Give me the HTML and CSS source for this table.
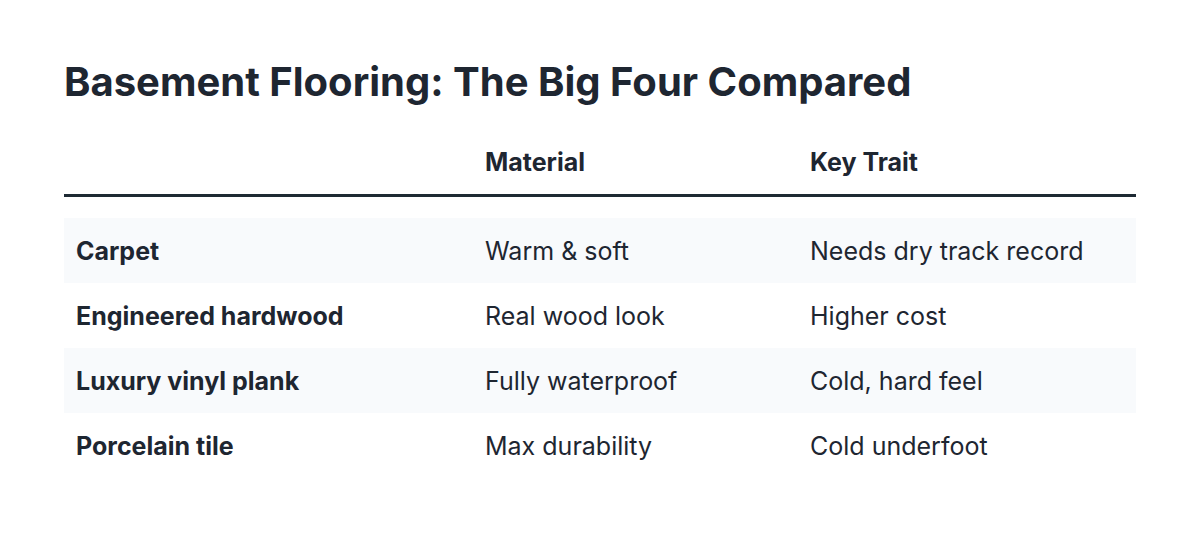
FILE: index.html
```html
<!DOCTYPE html>
<html lang="en">
<head>
<meta charset="utf-8">
<title>Basement Flooring</title>
<link rel="stylesheet" href="styles.css">
</head>
<body>
<main class="page">
  <h1 class="title">Basement Flooring: The Big Four Compared</h1>
  <table class="cmp">
    <thead>
      <tr>
        <th class="c1"></th>
        <th class="c2">Material</th>
        <th class="c3">Key Trait</th>
      </tr>
    </thead>
    <tbody>
      <tr class="alt">
        <td class="name">Carpet</td>
        <td>Warm &amp; soft</td>
        <td>Needs dry track record</td>
      </tr>
      <tr>
        <td class="name">Engineered hardwood</td>
        <td>Real wood look</td>
        <td>Higher cost</td>
      </tr>
      <tr class="alt">
        <td class="name">Luxury vinyl plank</td>
        <td>Fully waterproof</td>
        <td>Cold, hard feel</td>
      </tr>
      <tr>
        <td class="name">Porcelain tile</td>
        <td>Max durability</td>
        <td>Cold underfoot</td>
      </tr>
    </tbody>
  </table>
</main>
</body>
</html>
```
FILE: styles.css
```css
html, body {
  margin: 0;
  padding: 0;
  background: #ffffff;
}
body {
  font-family: Inter, "Noto Sans", "Liberation Sans", sans-serif;
  color: #1e2631;
}
.page {
  padding: 56px 64px 0 64px;
}
.title {
  margin: 0;
  font-size: 40px;
  line-height: 52px;
  font-weight: 700;
  color: #1e2631;
}
.cmp {
  width: 100%;
  margin-top: 34px;
  border-collapse: collapse;
  table-layout: fixed;
  font-size: 25px;
}
.c1 { width: 385px; }
.c2 { width: 301px; }
.cmp th {
  text-align: left;
  font-weight: 700;
  padding: 5px 12px 17px 12px;
  line-height: 30px;
  border-bottom: 3px solid #1e2a33;
  vertical-align: top;
}
.cmp tbody::before {
  content: "";
  display: table-row;
  height: 22px;
}
.cmp td {
  padding: 2px 12px 0 12px;
  height: 63px;
  line-height: 30px;
  font-weight: 400;
}
.cmp td.name {
  font-weight: 700;
}
.cmp tr.alt td {
  background: #f8fafc;
}
```
